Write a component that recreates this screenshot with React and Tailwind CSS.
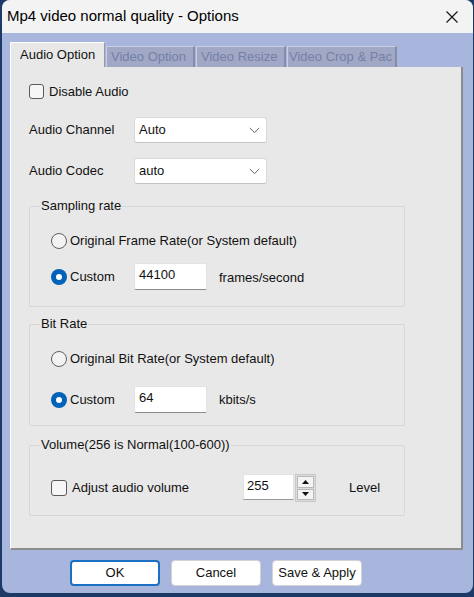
import React from "react";

function Chevron() {
  return (
    <svg width="11" height="7" viewBox="0 0 11 7" className="shrink-0">
      <path d="M0.8 1 L5.5 5.6 L10.2 1" fill="none" stroke="#606060" strokeWidth="1" />
    </svg>
  );
}

function Select({ value }) {
  return (
    <div className="w-[133px] h-[26px] bg-white border border-[#d9d9d9] border-b-[#c4c4c4] rounded-[3px] flex items-center justify-between pl-[4px] pr-[6px]">
      <span>{value}</span>
      <Chevron />
    </div>
  );
}

function Radio({ checked }) {
  if (checked) {
    return (
      <div className="w-[16px] h-[16px] rounded-full bg-[#0062b8] flex items-center justify-center shrink-0">
        <div className="w-[6px] h-[6px] rounded-full bg-white" />
      </div>
    );
  }
  return <div className="w-[16px] h-[16px] rounded-full border border-[#5e5e5e] bg-[#f3f3f3] shrink-0" />;
}

function Check({ size = "w-[15px] h-[15px]" }) {
  return <div className={`${size} rounded-[3px] border border-[#5a5a5a] bg-[#f6f6f6] shrink-0`} />;
}

function TextBox({ value, width = "w-[73px]" }) {
  return (
    <div className={`${width} h-[27px] bg-white border border-[#e2e2e2] border-b-[#8a8a8a] rounded-[2px] pl-[4px] pt-[3px] leading-[16px]`}>
      {value}
    </div>
  );
}

function Group({ title, height, children }) {
  return (
    <div className={`relative w-[376px] ${height} border border-[#d7d7d7] rounded-[2px]`}>
      <span className="absolute left-[10px] -top-[9px] px-[1px] bg-[#e8e8e8] leading-[16px]">{title}</span>
      {children}
    </div>
  );
}

function ActiveTab({ children }) {
  return (
    <div className="w-[95px] h-[25px] bg-[#e8e8e8] border-t border-l border-white border-r border-r-[#9a9a9a] flex items-center pl-[9px] text-[#111] whitespace-nowrap">
      {children}
    </div>
  );
}

function InactiveTab({ children, width, tight }) {
  return (
    <div
      className={`${width} h-[21px] bg-[#a0a8c6] border-t border-l border-[#c8cee6] border-r-2 border-r-[#848ca9] overflow-hidden flex items-center whitespace-nowrap text-[#7480a6]`}
    >
      <span className={tight ? "ml-[1px]" : "ml-[4px]"}>{children}</span>
    </div>
  );
}

function Button({ children, primary }) {
  return (
    <div
      className={`w-[90px] h-[26px] bg-white rounded-[4px] flex items-center justify-center text-[#111] ${
        primary ? "border-2 border-[#1a70c2]" : "border border-[#d3d3d3]"
      }`}
    >
      {children}
    </div>
  );
}

export default function App() {
  return (
    <div className="w-[474px] h-[597px] bg-[#1d3a66] pl-[2px] pr-[1px] pb-[4px] font-['Liberation_Sans',Arial,sans-serif] text-[13px] text-[#111]">
      <div className="h-full flex flex-col rounded-[8px] overflow-hidden bg-[#a8b5dc]">
        {/* Title bar */}
        <div className="h-[33px] shrink-0 bg-[#f3f3f3] flex items-center justify-between pl-[5px] pr-[15px]">
          <span className="text-[15px] text-black">Mp4 video normal quality - Options</span>
          <svg width="12" height="12" viewBox="0 0 12 12">
            <path d="M0.5 0.5 L11.5 11.5 M11.5 0.5 L0.5 11.5" stroke="#111" strokeWidth="1.1" />
          </svg>
        </div>

        {/* Client */}
        <div className="flex-1 pl-[8px] pt-[9px] flex flex-col">
          {/* Tabs */}
          <div className="h-[25px] flex items-end">
            <ActiveTab>Audio Option</ActiveTab>
            <div className="w-[1px]" />
            <InactiveTab width="w-[89px]">Video Option</InactiveTab>
            <div className="w-[1px]" />
            <InactiveTab width="w-[90px]">Video Resize</InactiveTab>
            <div className="w-[1px]" />
            <InactiveTab width="w-[110px]" tight>Video Crop &amp; Pac</InactiveTab>
          </div>

          {/* Panel */}
          <div className="w-[453px] h-[483px] bg-[#e8e8e8] border-l border-white border-r-2 border-r-[#8c8c8c] border-b-2 border-b-[#8c8c8c] pl-[18px] pt-[17px] flex flex-col">
            <div className="h-[15px] flex items-center gap-[5px]">
              <Check />
              <span>Disable Audio</span>
            </div>

            <div className="mt-[18px] h-[26px] flex items-center">
              <span className="w-[105px]">Audio Channel</span>
              <Select value="Auto" />
            </div>

            <div className="mt-[15px] h-[26px] flex items-center">
              <span className="w-[105px]">Audio Codec</span>
              <Select value="auto" />
            </div>

            <div className="mt-[22px]">
              <Group title="Sampling rate" height="h-[101px]">
                <div className="pl-[21px] pt-[26px] flex flex-col">
                  <div className="h-[16px] flex items-center gap-[3px]">
                    <Radio />
                    <span>Original Frame Rate(or System default)</span>
                  </div>
                  <div className="mt-[14px] h-[27px] flex items-center">
                    <div className="w-[83px] flex items-center gap-[3px]">
                      <Radio checked />
                      <span>Custom</span>
                    </div>
                    <TextBox value="44100" />
                    <span className="ml-[12px] mt-[3px]">frames/second</span>
                  </div>
                </div>
              </Group>
            </div>

            <div className="mt-[17px]">
              <Group title="Bit Rate" height="h-[102px]">
                <div className="pl-[21px] pt-[26px] flex flex-col">
                  <div className="h-[16px] flex items-center gap-[3px]">
                    <Radio />
                    <span>Original Bit Rate(or System default)</span>
                  </div>
                  <div className="mt-[19px] h-[27px] flex items-center">
                    <div className="w-[83px] flex items-center gap-[3px]">
                      <Radio checked />
                      <span>Custom</span>
                    </div>
                    <TextBox value="64" />
                    <span className="ml-[12px] mt-[1px]">kbits/s</span>
                  </div>
                </div>
              </Group>
            </div>

            <div className="mt-[19px]">
              <Group title="Volume(256 is Normal(100-600))" height="h-[71px]">
                <div className="pl-[21px] pt-[28px] flex">
                  <div className="h-[27px] flex items-center">
                    <div className="w-[192px] flex items-center gap-[5px]">
                      <Check size="w-[16px] h-[16px]" />
                      <span>Adjust audio volume</span>
                    </div>
                    <div className="w-[51px] h-[26px] bg-white border border-[#e2e2e2] border-b-[#9a9a9a] pl-[3px] pt-[3px] leading-[16px] self-start">
                      255
                    </div>
                    <div className="w-[21px] h-[28px] ml-[1px] self-start flex flex-col gap-[1px] p-[1px] bg-[#dcdcdc] border border-[#c8c8c8]">
                      <div className="flex-1 bg-[#f4f4f4] border border-[#b8b8b8] flex items-center justify-center">
                        <svg width="7" height="4" viewBox="0 0 7 4"><path d="M3.5 0 L7 4 L0 4 Z" fill="#111" /></svg>
                      </div>
                      <div className="flex-1 bg-[#f4f4f4] border border-[#b8b8b8] flex items-center justify-center">
                        <svg width="7" height="4" viewBox="0 0 7 4"><path d="M0 0 L7 0 L3.5 4 Z" fill="#111" /></svg>
                      </div>
                    </div>
                    <span className="ml-[33px]">Level</span>
                  </div>
                </div>
              </Group>
            </div>
          </div>

          {/* Buttons */}
          <div className="mt-[10px] ml-[60px] flex gap-[11px]">
            <Button primary>OK</Button>
            <Button>Cancel</Button>
            <Button>Save &amp; Apply</Button>
          </div>
        </div>
      </div>
    </div>
  );
}
